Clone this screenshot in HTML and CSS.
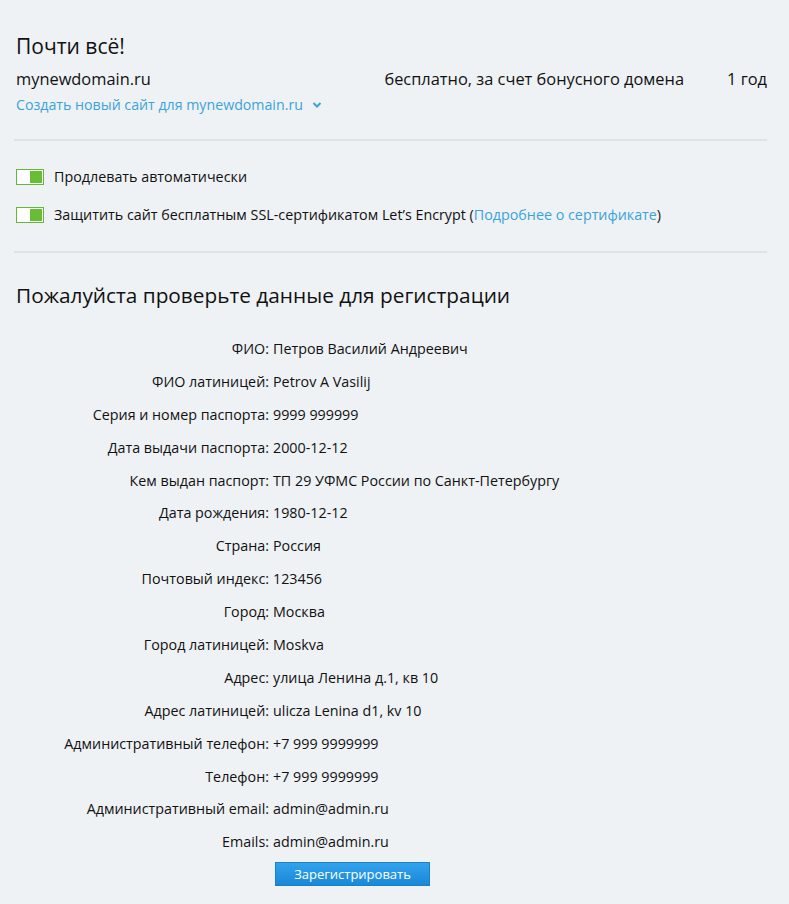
FILE: index.html
```html
<!DOCTYPE html>
<html lang="ru">
<head>
<meta charset="utf-8">
<link rel="stylesheet" href="styles.css">
</head>
<body>
<div class="page">
  <h1 class="title">Почти всё!</h1>
  <div class="domain-row">
    <div class="domain-name">mynewdomain.ru</div>
    <div class="domain-price">бесплатно, за счет бонусного домена</div>
    <div class="domain-term">1 год</div>
  </div>
  <a class="create-link" href="#">Создать новый сайт для mynewdomain.ru <svg class="chev" width="10" height="8" viewBox="0 0 10 8"><path d="M1.5 2 L5 5.5 L8.5 2" fill="none" stroke="#3aa3d9" stroke-width="2"/></svg></a>
  <hr class="sep sep1">
  <div class="options">
    <div class="option"><span class="toggle"><span class="knob"></span></span><span>Продлевать автоматически</span></div>
    <div class="option"><span class="toggle"><span class="knob"></span></span><span>Защитить сайт бесплатным SSL-сертификатом Let’s Encrypt (<a href="#" class="link">Подробнее о сертификате</a>)</span></div>
  </div>
  <hr class="sep sep2">
  <h2 class="subtitle">Пожалуйста проверьте данные для регистрации</h2>
  <div class="data">
    <div class="lbl">ФИО:</div><div class="val">Петров Василий Андреевич</div>
    <div class="lbl">ФИО латиницей:</div><div class="val">Petrov A Vasilij</div>
    <div class="lbl">Серия и номер паспорта:</div><div class="val">9999 999999</div>
    <div class="lbl">Дата выдачи паспорта:</div><div class="val">2000-12-12</div>
    <div class="lbl">Кем выдан паспорт:</div><div class="val">ТП 29 УФМС России по Санкт-Петербургу</div>
    <div class="lbl">Дата рождения:</div><div class="val">1980-12-12</div>
    <div class="lbl">Страна:</div><div class="val">Россия</div>
    <div class="lbl">Почтовый индекс:</div><div class="val">123456</div>
    <div class="lbl">Город:</div><div class="val">Москва</div>
    <div class="lbl">Город латиницей:</div><div class="val">Moskva</div>
    <div class="lbl">Адрес:</div><div class="val">улица Ленина д.1, кв 10</div>
    <div class="lbl">Адрес латиницей:</div><div class="val">ulicza Lenina d1, kv 10</div>
    <div class="lbl">Административный телефон:</div><div class="val">+7 999 9999999</div>
    <div class="lbl">Телефон:</div><div class="val">+7 999 9999999</div>
    <div class="lbl">Административный email:</div><div class="val">admin@admin.ru</div>
    <div class="lbl">Emails:</div><div class="val">admin@admin.ru</div>
  </div>
  <div class="actions"><button class="btn">Зарегистрировать</button></div>
</div>
</body>
</html>
```
FILE: styles.css
```css
html, body {
  margin: 0;
  padding: 0;
  background: #eef2f5;
}
body {
  font-family: "Open Sans", "Noto Sans", sans-serif;
  color: #111;
  font-size: 14.3px;
}
.page {
  padding: 28px 22px 0 16px;
}
.title {
  font-size: 21px;
  font-weight: 400;
  margin: 0;
  line-height: 36px;
}
.domain-row {
  display: flex;
  align-items: baseline;
  line-height: 24px;
  margin-top: 3px;
  font-size: 16.4px;
}
.domain-name { flex: 1; }
.domain-price { margin-right: 43px; }
.create-link {
  display: inline-flex;
  align-items: center;
  gap: 9px;
  color: #3aa3d9;
  text-decoration: none;
  line-height: 22px;
  font-size: 14.2px;
  margin-top: 3px;
}
.sep {
  border: 0;
  height: 2px;
  background: #dfe3e6;
  margin: 0 0 0 -2px;
}
.sep1 { margin-top: 23px; }
.options {
  display: flex;
  flex-direction: column;
  gap: 14px;
  padding: 24px 0 24px;
}
.option {
  display: flex;
  align-items: center;
  gap: 10px;
  line-height: 24px;
}
.toggle {
  box-sizing: border-box;
  width: 28px;
  height: 16px;
  border: 1px solid #63b83a;
  background: #fff;
  display: flex;
  justify-content: flex-end;
  padding: 1px;
}
.knob {
  width: 12px;
  height: 12px;
  background: #67bd34;
}
.link { color: #3aa3d9; text-decoration: none; }
.subtitle {
  font-size: 20.8px;
  font-weight: 400;
  margin: 26px 0 26px;
  line-height: 32px;
}
.data {
  display: grid;
  grid-template-columns: 253px 1fr;
  column-gap: 4px;
  row-gap: 8.9px;
  line-height: 24px;
}
.lbl { text-align: right; }
.actions {
  padding: 8px 0 0 259px;
}
.btn {
  font-family: inherit;
  font-size: 13px;
  color: #fff;
  width: 155px;
  height: 24px;
  border: 1px solid #1a80c8;
  background: linear-gradient(#33a2ec, #1889d9);
  padding: 0;
  cursor: pointer;
}
```
